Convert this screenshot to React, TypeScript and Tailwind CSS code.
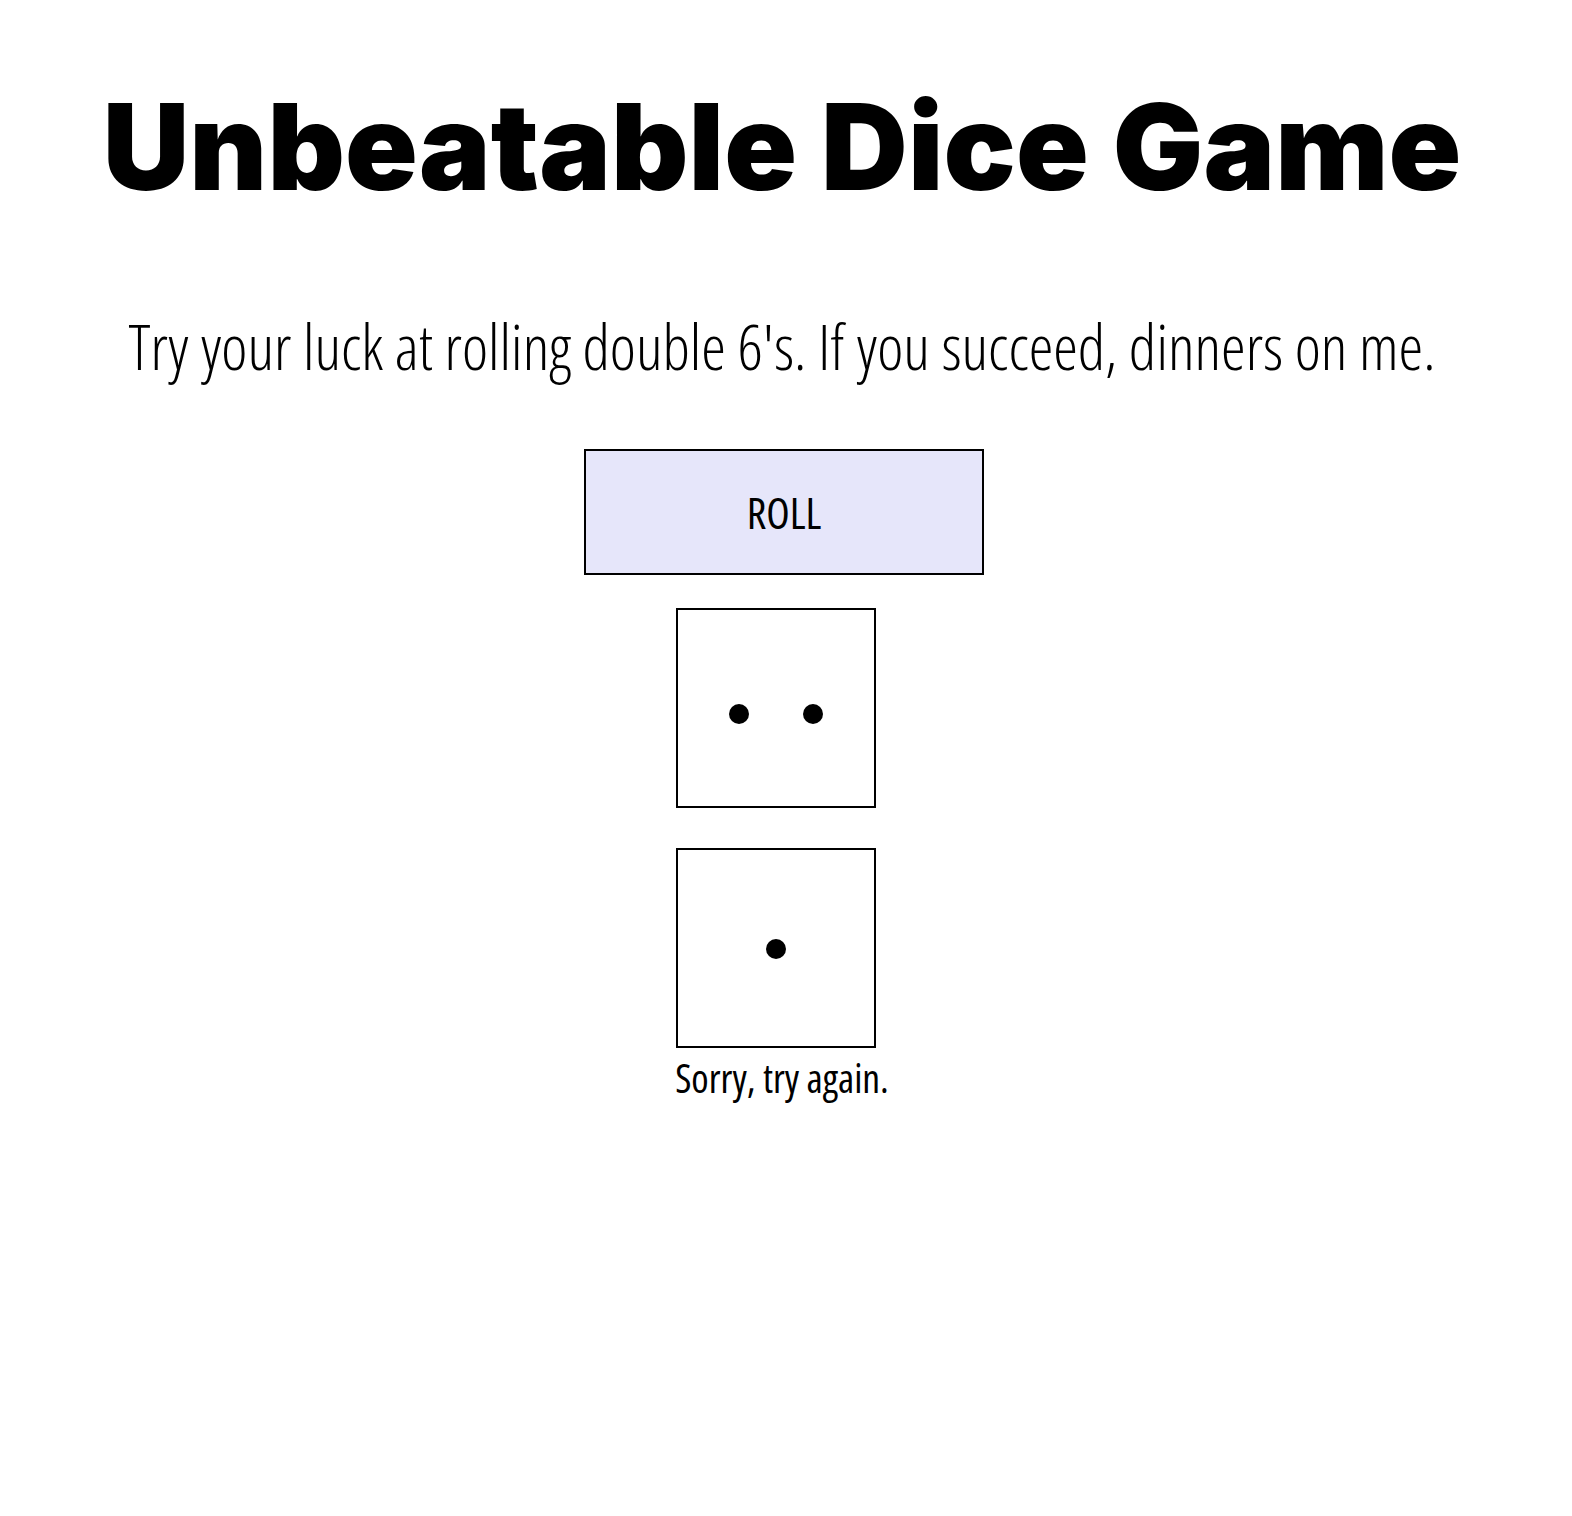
function Dot() {
  return <span className="block h-[20px] w-[20px] rounded-full bg-black" />;
}

function Die({ value }: { value: number }) {
  return (
    <div className="flex h-[200px] w-[200px] items-center justify-center border-2 border-black bg-white">
      {value === 2 ? (
        <div className="mt-[12px] flex gap-[54px]">
          <Dot />
          <Dot />
        </div>
      ) : (
        <div className="mt-[2px]">
          <Dot />
        </div>
      )}
    </div>
  );
}

export default function App() {
  const narrow = { fontFamily: '"Open Sans", "Noto Sans", sans-serif' };
  return (
    <div className="min-h-[1516px] bg-white text-black">
      <div className="flex flex-col items-center pr-[8px] pt-[87px]">
        <h1
          className="text-[120px] font-black leading-none whitespace-nowrap tracking-[0.1px]"
          style={{ fontFamily: 'Inter, "Liberation Sans", sans-serif' }}
        >
          Unbeatable Dice Game
        </h1>
        <p
          className="mt-[108px] text-[62.3px] font-light leading-none whitespace-nowrap font-stretch-[62.5%]"
          style={narrow}
        >
          Try your luck at rolling double 6's. If you succeed, dinners on me.
        </p>
        <button
          className="mt-[72px] ml-[4px] flex h-[126px] w-[400px] items-center justify-center border-2 border-black bg-[#e6e6fa] text-[43px] font-normal leading-none font-stretch-[62.5%]"
          style={narrow}
        >
          ROLL
        </button>
        <div className="mt-[33px] mr-[12px] flex flex-col items-center gap-[40px]">
          <Die value={2} />
          <Die value={1} />
        </div>
        <p
          className="mt-[11px] text-[39.5px] font-normal leading-none whitespace-nowrap font-stretch-[62.5%]"
          style={narrow}
        >
          Sorry, try again.
        </p>
      </div>
    </div>
  );
}
